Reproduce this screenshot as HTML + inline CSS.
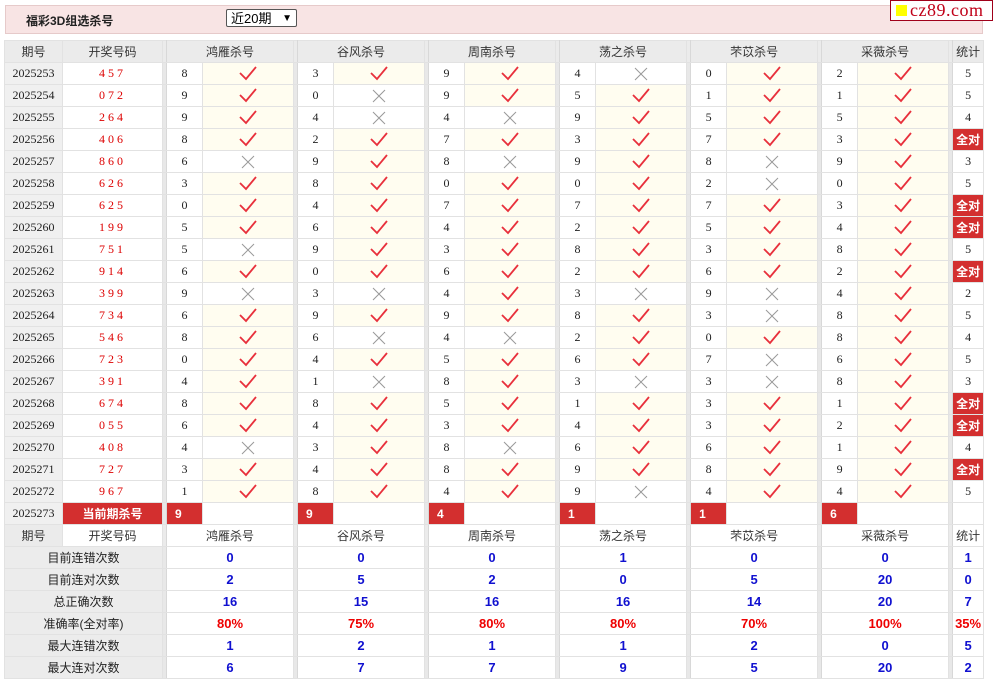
<!DOCTYPE html>
<html><head><meta charset="utf-8">
<style>
body{margin:0;width:995px;height:683px;background:#fff;position:relative;overflow:hidden;font-family:"Liberation Sans","Noto Sans CJK SC",sans-serif;}
.top{position:absolute;left:5px;top:5px;width:976px;height:27px;background:#f8e4e4;border:1px solid #e6caca;}
.top b{position:absolute;left:20px;top:6px;font-size:12px;color:#222;}
.sel{position:absolute;left:220px;top:3px;width:69px;height:18px;border:1px solid #555;border-radius:2px;background:#fff;font-size:13px;line-height:18px;padding-left:4px;box-sizing:border-box;width:71px;}
.sel span{position:absolute;right:4px;top:0;font-size:10px;}
.logo{position:absolute;left:890px;top:0;width:101px;height:19px;border:1px solid #a0001a;background:#fff;}
.logo i{position:absolute;left:5px;top:4px;width:11px;height:11px;background:#ff0;}
.logo span{position:absolute;left:19px;top:-1px;font-family:"Liberation Serif",serif;font-size:18px;color:#c00018;letter-spacing:0.5px;}
table{position:absolute;left:4px;top:40px;border-collapse:collapse;table-layout:fixed;width:979px;}
td{border:1px solid #e2e2e2;height:21px;padding:0;text-align:center;font-size:12px;font-family:"Liberation Serif","Noto Serif CJK SC",serif;color:#222;}
tr.h td{background:#ebebeb;font-family:"Liberation Sans","Noto Sans CJK SC",sans-serif;font-size:12px;color:#333;}
td.q{background:#f0f0f0;}
td.k{color:#d00;letter-spacing:3px;}
td.s{background:#e8e8e8;border-left:1px solid #d8d8d8;border-right:1px solid #d8d8d8;}
td.n{font-size:12px;}
td.c{background:#fffdf0;}
td.c svg,td.x svg{display:block;margin:0 auto;}
td.a{background:#d32f2f;color:#fff;font-weight:bold;font-family:"Liberation Sans","Noto Sans CJK SC",sans-serif;font-size:12px;}
td.r{background:#d32f2f;color:#fff;font-weight:bold;font-family:"Liberation Sans",sans-serif;font-size:12px;text-align:left;padding-left:8px;}
td.l{background:#ececec;font-family:"Liberation Sans","Noto Sans CJK SC",sans-serif;color:#222;}
td.v{color:#1a1aff;font-weight:bold;font-family:"Liberation Sans",sans-serif;font-size:13px;color:#1010d0;}
td.p{color:#e00;font-weight:bold;font-family:"Liberation Sans",sans-serif;font-size:13px;}
</style></head><body>
<svg width="0" height="0" style="position:absolute"><defs>
<g id="ck"><path d="M1 7 L7 13 L17 1" fill="none" stroke="#e8303c" stroke-width="1.8"/></g>
<g id="xx"><path d="M2 1 L14 13 M14 1 L2 13" fill="none" stroke="#999" stroke-width="1"/></g>
</defs></svg>
<div class="top"><b>福彩3D组选杀号</b><div class="sel">近20期<span>&#9660;</span></div></div>
<div class="logo"><i></i><span>cz89.com</span></div>
<table>
<colgroup><col style="width:58px"><col style="width:100px"><col style="width:4px">
<col style="width:36px"><col style="width:91px"><col style="width:4px">
<col style="width:36px"><col style="width:91px"><col style="width:4px">
<col style="width:36px"><col style="width:91px"><col style="width:4px">
<col style="width:36px"><col style="width:91px"><col style="width:4px">
<col style="width:36px"><col style="width:91px"><col style="width:4px">
<col style="width:36px"><col style="width:91px"><col style="width:4px">
<col style="width:31px"></colgroup>
<tr class="h"><td>期号</td><td>开奖号码</td><td class="s"></td><td colspan="2">鸿雁杀号</td><td class="s"></td><td colspan="2">谷风杀号</td><td class="s"></td><td colspan="2">周南杀号</td><td class="s"></td><td colspan="2">荡之杀号</td><td class="s"></td><td colspan="2">芣苡杀号</td><td class="s"></td><td colspan="2">采薇杀号</td><td class="s"></td><td>统计</td></tr>
<tr><td class="q">2025253</td><td class="k">457</td><td class="s"></td><td>8</td><td class="c"><svg width="18" height="15"><use href="#ck"/></svg></td><td class="s"></td><td>3</td><td class="c"><svg width="18" height="15"><use href="#ck"/></svg></td><td class="s"></td><td>9</td><td class="c"><svg width="18" height="15"><use href="#ck"/></svg></td><td class="s"></td><td>4</td><td class="x"><svg width="16" height="14"><use href="#xx"/></svg></td><td class="s"></td><td>0</td><td class="c"><svg width="18" height="15"><use href="#ck"/></svg></td><td class="s"></td><td>2</td><td class="c"><svg width="18" height="15"><use href="#ck"/></svg></td><td class="s"></td><td>5</td></tr>
<tr><td class="q">2025254</td><td class="k">072</td><td class="s"></td><td>9</td><td class="c"><svg width="18" height="15"><use href="#ck"/></svg></td><td class="s"></td><td>0</td><td class="x"><svg width="16" height="14"><use href="#xx"/></svg></td><td class="s"></td><td>9</td><td class="c"><svg width="18" height="15"><use href="#ck"/></svg></td><td class="s"></td><td>5</td><td class="c"><svg width="18" height="15"><use href="#ck"/></svg></td><td class="s"></td><td>1</td><td class="c"><svg width="18" height="15"><use href="#ck"/></svg></td><td class="s"></td><td>1</td><td class="c"><svg width="18" height="15"><use href="#ck"/></svg></td><td class="s"></td><td>5</td></tr>
<tr><td class="q">2025255</td><td class="k">264</td><td class="s"></td><td>9</td><td class="c"><svg width="18" height="15"><use href="#ck"/></svg></td><td class="s"></td><td>4</td><td class="x"><svg width="16" height="14"><use href="#xx"/></svg></td><td class="s"></td><td>4</td><td class="x"><svg width="16" height="14"><use href="#xx"/></svg></td><td class="s"></td><td>9</td><td class="c"><svg width="18" height="15"><use href="#ck"/></svg></td><td class="s"></td><td>5</td><td class="c"><svg width="18" height="15"><use href="#ck"/></svg></td><td class="s"></td><td>5</td><td class="c"><svg width="18" height="15"><use href="#ck"/></svg></td><td class="s"></td><td>4</td></tr>
<tr><td class="q">2025256</td><td class="k">406</td><td class="s"></td><td>8</td><td class="c"><svg width="18" height="15"><use href="#ck"/></svg></td><td class="s"></td><td>2</td><td class="c"><svg width="18" height="15"><use href="#ck"/></svg></td><td class="s"></td><td>7</td><td class="c"><svg width="18" height="15"><use href="#ck"/></svg></td><td class="s"></td><td>3</td><td class="c"><svg width="18" height="15"><use href="#ck"/></svg></td><td class="s"></td><td>7</td><td class="c"><svg width="18" height="15"><use href="#ck"/></svg></td><td class="s"></td><td>3</td><td class="c"><svg width="18" height="15"><use href="#ck"/></svg></td><td class="s"></td><td class="a">全对</td></tr>
<tr><td class="q">2025257</td><td class="k">860</td><td class="s"></td><td>6</td><td class="x"><svg width="16" height="14"><use href="#xx"/></svg></td><td class="s"></td><td>9</td><td class="c"><svg width="18" height="15"><use href="#ck"/></svg></td><td class="s"></td><td>8</td><td class="x"><svg width="16" height="14"><use href="#xx"/></svg></td><td class="s"></td><td>9</td><td class="c"><svg width="18" height="15"><use href="#ck"/></svg></td><td class="s"></td><td>8</td><td class="x"><svg width="16" height="14"><use href="#xx"/></svg></td><td class="s"></td><td>9</td><td class="c"><svg width="18" height="15"><use href="#ck"/></svg></td><td class="s"></td><td>3</td></tr>
<tr><td class="q">2025258</td><td class="k">626</td><td class="s"></td><td>3</td><td class="c"><svg width="18" height="15"><use href="#ck"/></svg></td><td class="s"></td><td>8</td><td class="c"><svg width="18" height="15"><use href="#ck"/></svg></td><td class="s"></td><td>0</td><td class="c"><svg width="18" height="15"><use href="#ck"/></svg></td><td class="s"></td><td>0</td><td class="c"><svg width="18" height="15"><use href="#ck"/></svg></td><td class="s"></td><td>2</td><td class="x"><svg width="16" height="14"><use href="#xx"/></svg></td><td class="s"></td><td>0</td><td class="c"><svg width="18" height="15"><use href="#ck"/></svg></td><td class="s"></td><td>5</td></tr>
<tr><td class="q">2025259</td><td class="k">625</td><td class="s"></td><td>0</td><td class="c"><svg width="18" height="15"><use href="#ck"/></svg></td><td class="s"></td><td>4</td><td class="c"><svg width="18" height="15"><use href="#ck"/></svg></td><td class="s"></td><td>7</td><td class="c"><svg width="18" height="15"><use href="#ck"/></svg></td><td class="s"></td><td>7</td><td class="c"><svg width="18" height="15"><use href="#ck"/></svg></td><td class="s"></td><td>7</td><td class="c"><svg width="18" height="15"><use href="#ck"/></svg></td><td class="s"></td><td>3</td><td class="c"><svg width="18" height="15"><use href="#ck"/></svg></td><td class="s"></td><td class="a">全对</td></tr>
<tr><td class="q">2025260</td><td class="k">199</td><td class="s"></td><td>5</td><td class="c"><svg width="18" height="15"><use href="#ck"/></svg></td><td class="s"></td><td>6</td><td class="c"><svg width="18" height="15"><use href="#ck"/></svg></td><td class="s"></td><td>4</td><td class="c"><svg width="18" height="15"><use href="#ck"/></svg></td><td class="s"></td><td>2</td><td class="c"><svg width="18" height="15"><use href="#ck"/></svg></td><td class="s"></td><td>5</td><td class="c"><svg width="18" height="15"><use href="#ck"/></svg></td><td class="s"></td><td>4</td><td class="c"><svg width="18" height="15"><use href="#ck"/></svg></td><td class="s"></td><td class="a">全对</td></tr>
<tr><td class="q">2025261</td><td class="k">751</td><td class="s"></td><td>5</td><td class="x"><svg width="16" height="14"><use href="#xx"/></svg></td><td class="s"></td><td>9</td><td class="c"><svg width="18" height="15"><use href="#ck"/></svg></td><td class="s"></td><td>3</td><td class="c"><svg width="18" height="15"><use href="#ck"/></svg></td><td class="s"></td><td>8</td><td class="c"><svg width="18" height="15"><use href="#ck"/></svg></td><td class="s"></td><td>3</td><td class="c"><svg width="18" height="15"><use href="#ck"/></svg></td><td class="s"></td><td>8</td><td class="c"><svg width="18" height="15"><use href="#ck"/></svg></td><td class="s"></td><td>5</td></tr>
<tr><td class="q">2025262</td><td class="k">914</td><td class="s"></td><td>6</td><td class="c"><svg width="18" height="15"><use href="#ck"/></svg></td><td class="s"></td><td>0</td><td class="c"><svg width="18" height="15"><use href="#ck"/></svg></td><td class="s"></td><td>6</td><td class="c"><svg width="18" height="15"><use href="#ck"/></svg></td><td class="s"></td><td>2</td><td class="c"><svg width="18" height="15"><use href="#ck"/></svg></td><td class="s"></td><td>6</td><td class="c"><svg width="18" height="15"><use href="#ck"/></svg></td><td class="s"></td><td>2</td><td class="c"><svg width="18" height="15"><use href="#ck"/></svg></td><td class="s"></td><td class="a">全对</td></tr>
<tr><td class="q">2025263</td><td class="k">399</td><td class="s"></td><td>9</td><td class="x"><svg width="16" height="14"><use href="#xx"/></svg></td><td class="s"></td><td>3</td><td class="x"><svg width="16" height="14"><use href="#xx"/></svg></td><td class="s"></td><td>4</td><td class="c"><svg width="18" height="15"><use href="#ck"/></svg></td><td class="s"></td><td>3</td><td class="x"><svg width="16" height="14"><use href="#xx"/></svg></td><td class="s"></td><td>9</td><td class="x"><svg width="16" height="14"><use href="#xx"/></svg></td><td class="s"></td><td>4</td><td class="c"><svg width="18" height="15"><use href="#ck"/></svg></td><td class="s"></td><td>2</td></tr>
<tr><td class="q">2025264</td><td class="k">734</td><td class="s"></td><td>6</td><td class="c"><svg width="18" height="15"><use href="#ck"/></svg></td><td class="s"></td><td>9</td><td class="c"><svg width="18" height="15"><use href="#ck"/></svg></td><td class="s"></td><td>9</td><td class="c"><svg width="18" height="15"><use href="#ck"/></svg></td><td class="s"></td><td>8</td><td class="c"><svg width="18" height="15"><use href="#ck"/></svg></td><td class="s"></td><td>3</td><td class="x"><svg width="16" height="14"><use href="#xx"/></svg></td><td class="s"></td><td>8</td><td class="c"><svg width="18" height="15"><use href="#ck"/></svg></td><td class="s"></td><td>5</td></tr>
<tr><td class="q">2025265</td><td class="k">546</td><td class="s"></td><td>8</td><td class="c"><svg width="18" height="15"><use href="#ck"/></svg></td><td class="s"></td><td>6</td><td class="x"><svg width="16" height="14"><use href="#xx"/></svg></td><td class="s"></td><td>4</td><td class="x"><svg width="16" height="14"><use href="#xx"/></svg></td><td class="s"></td><td>2</td><td class="c"><svg width="18" height="15"><use href="#ck"/></svg></td><td class="s"></td><td>0</td><td class="c"><svg width="18" height="15"><use href="#ck"/></svg></td><td class="s"></td><td>8</td><td class="c"><svg width="18" height="15"><use href="#ck"/></svg></td><td class="s"></td><td>4</td></tr>
<tr><td class="q">2025266</td><td class="k">723</td><td class="s"></td><td>0</td><td class="c"><svg width="18" height="15"><use href="#ck"/></svg></td><td class="s"></td><td>4</td><td class="c"><svg width="18" height="15"><use href="#ck"/></svg></td><td class="s"></td><td>5</td><td class="c"><svg width="18" height="15"><use href="#ck"/></svg></td><td class="s"></td><td>6</td><td class="c"><svg width="18" height="15"><use href="#ck"/></svg></td><td class="s"></td><td>7</td><td class="x"><svg width="16" height="14"><use href="#xx"/></svg></td><td class="s"></td><td>6</td><td class="c"><svg width="18" height="15"><use href="#ck"/></svg></td><td class="s"></td><td>5</td></tr>
<tr><td class="q">2025267</td><td class="k">391</td><td class="s"></td><td>4</td><td class="c"><svg width="18" height="15"><use href="#ck"/></svg></td><td class="s"></td><td>1</td><td class="x"><svg width="16" height="14"><use href="#xx"/></svg></td><td class="s"></td><td>8</td><td class="c"><svg width="18" height="15"><use href="#ck"/></svg></td><td class="s"></td><td>3</td><td class="x"><svg width="16" height="14"><use href="#xx"/></svg></td><td class="s"></td><td>3</td><td class="x"><svg width="16" height="14"><use href="#xx"/></svg></td><td class="s"></td><td>8</td><td class="c"><svg width="18" height="15"><use href="#ck"/></svg></td><td class="s"></td><td>3</td></tr>
<tr><td class="q">2025268</td><td class="k">674</td><td class="s"></td><td>8</td><td class="c"><svg width="18" height="15"><use href="#ck"/></svg></td><td class="s"></td><td>8</td><td class="c"><svg width="18" height="15"><use href="#ck"/></svg></td><td class="s"></td><td>5</td><td class="c"><svg width="18" height="15"><use href="#ck"/></svg></td><td class="s"></td><td>1</td><td class="c"><svg width="18" height="15"><use href="#ck"/></svg></td><td class="s"></td><td>3</td><td class="c"><svg width="18" height="15"><use href="#ck"/></svg></td><td class="s"></td><td>1</td><td class="c"><svg width="18" height="15"><use href="#ck"/></svg></td><td class="s"></td><td class="a">全对</td></tr>
<tr><td class="q">2025269</td><td class="k">055</td><td class="s"></td><td>6</td><td class="c"><svg width="18" height="15"><use href="#ck"/></svg></td><td class="s"></td><td>4</td><td class="c"><svg width="18" height="15"><use href="#ck"/></svg></td><td class="s"></td><td>3</td><td class="c"><svg width="18" height="15"><use href="#ck"/></svg></td><td class="s"></td><td>4</td><td class="c"><svg width="18" height="15"><use href="#ck"/></svg></td><td class="s"></td><td>3</td><td class="c"><svg width="18" height="15"><use href="#ck"/></svg></td><td class="s"></td><td>2</td><td class="c"><svg width="18" height="15"><use href="#ck"/></svg></td><td class="s"></td><td class="a">全对</td></tr>
<tr><td class="q">2025270</td><td class="k">408</td><td class="s"></td><td>4</td><td class="x"><svg width="16" height="14"><use href="#xx"/></svg></td><td class="s"></td><td>3</td><td class="c"><svg width="18" height="15"><use href="#ck"/></svg></td><td class="s"></td><td>8</td><td class="x"><svg width="16" height="14"><use href="#xx"/></svg></td><td class="s"></td><td>6</td><td class="c"><svg width="18" height="15"><use href="#ck"/></svg></td><td class="s"></td><td>6</td><td class="c"><svg width="18" height="15"><use href="#ck"/></svg></td><td class="s"></td><td>1</td><td class="c"><svg width="18" height="15"><use href="#ck"/></svg></td><td class="s"></td><td>4</td></tr>
<tr><td class="q">2025271</td><td class="k">727</td><td class="s"></td><td>3</td><td class="c"><svg width="18" height="15"><use href="#ck"/></svg></td><td class="s"></td><td>4</td><td class="c"><svg width="18" height="15"><use href="#ck"/></svg></td><td class="s"></td><td>8</td><td class="c"><svg width="18" height="15"><use href="#ck"/></svg></td><td class="s"></td><td>9</td><td class="c"><svg width="18" height="15"><use href="#ck"/></svg></td><td class="s"></td><td>8</td><td class="c"><svg width="18" height="15"><use href="#ck"/></svg></td><td class="s"></td><td>9</td><td class="c"><svg width="18" height="15"><use href="#ck"/></svg></td><td class="s"></td><td class="a">全对</td></tr>
<tr><td class="q">2025272</td><td class="k">967</td><td class="s"></td><td>1</td><td class="c"><svg width="18" height="15"><use href="#ck"/></svg></td><td class="s"></td><td>8</td><td class="c"><svg width="18" height="15"><use href="#ck"/></svg></td><td class="s"></td><td>4</td><td class="c"><svg width="18" height="15"><use href="#ck"/></svg></td><td class="s"></td><td>9</td><td class="x"><svg width="16" height="14"><use href="#xx"/></svg></td><td class="s"></td><td>4</td><td class="c"><svg width="18" height="15"><use href="#ck"/></svg></td><td class="s"></td><td>4</td><td class="c"><svg width="18" height="15"><use href="#ck"/></svg></td><td class="s"></td><td>5</td></tr>
<tr><td class="q">2025273</td><td class="a">当前期杀号</td><td class="s"></td><td class="r">9</td><td></td><td class="s"></td><td class="r">9</td><td></td><td class="s"></td><td class="r">4</td><td></td><td class="s"></td><td class="r">1</td><td></td><td class="s"></td><td class="r">1</td><td></td><td class="s"></td><td class="r">6</td><td></td><td class="s"></td><td></td></tr>
<tr class="h"><td>期号</td><td style="background:#fff">开奖号码</td><td class="s"></td><td colspan="2" style="background:#fff">鸿雁杀号</td><td class="s"></td><td colspan="2" style="background:#fff">谷风杀号</td><td class="s"></td><td colspan="2" style="background:#fff">周南杀号</td><td class="s"></td><td colspan="2" style="background:#fff">荡之杀号</td><td class="s"></td><td colspan="2" style="background:#fff">芣苡杀号</td><td class="s"></td><td colspan="2" style="background:#fff">采薇杀号</td><td class="s"></td><td style="background:#fff">统计</td></tr>
<tr><td colspan="2" class="l">目前连错次数</td><td class="s"></td><td colspan="2" class="v">0</td><td class="s"></td><td colspan="2" class="v">0</td><td class="s"></td><td colspan="2" class="v">0</td><td class="s"></td><td colspan="2" class="v">1</td><td class="s"></td><td colspan="2" class="v">0</td><td class="s"></td><td colspan="2" class="v">0</td><td class="s"></td><td class="v">1</td></tr>
<tr><td colspan="2" class="l">目前连对次数</td><td class="s"></td><td colspan="2" class="v">2</td><td class="s"></td><td colspan="2" class="v">5</td><td class="s"></td><td colspan="2" class="v">2</td><td class="s"></td><td colspan="2" class="v">0</td><td class="s"></td><td colspan="2" class="v">5</td><td class="s"></td><td colspan="2" class="v">20</td><td class="s"></td><td class="v">0</td></tr>
<tr><td colspan="2" class="l">总正确次数</td><td class="s"></td><td colspan="2" class="v">16</td><td class="s"></td><td colspan="2" class="v">15</td><td class="s"></td><td colspan="2" class="v">16</td><td class="s"></td><td colspan="2" class="v">16</td><td class="s"></td><td colspan="2" class="v">14</td><td class="s"></td><td colspan="2" class="v">20</td><td class="s"></td><td class="v">7</td></tr>
<tr><td colspan="2" class="l">准确率(全对率)</td><td class="s"></td><td colspan="2" class="p">80%</td><td class="s"></td><td colspan="2" class="p">75%</td><td class="s"></td><td colspan="2" class="p">80%</td><td class="s"></td><td colspan="2" class="p">80%</td><td class="s"></td><td colspan="2" class="p">70%</td><td class="s"></td><td colspan="2" class="p">100%</td><td class="s"></td><td class="p">35%</td></tr>
<tr><td colspan="2" class="l">最大连错次数</td><td class="s"></td><td colspan="2" class="v">1</td><td class="s"></td><td colspan="2" class="v">2</td><td class="s"></td><td colspan="2" class="v">1</td><td class="s"></td><td colspan="2" class="v">1</td><td class="s"></td><td colspan="2" class="v">2</td><td class="s"></td><td colspan="2" class="v">0</td><td class="s"></td><td class="v">5</td></tr>
<tr><td colspan="2" class="l">最大连对次数</td><td class="s"></td><td colspan="2" class="v">6</td><td class="s"></td><td colspan="2" class="v">7</td><td class="s"></td><td colspan="2" class="v">7</td><td class="s"></td><td colspan="2" class="v">9</td><td class="s"></td><td colspan="2" class="v">5</td><td class="s"></td><td colspan="2" class="v">20</td><td class="s"></td><td class="v">2</td></tr>
</table>
</body></html>
